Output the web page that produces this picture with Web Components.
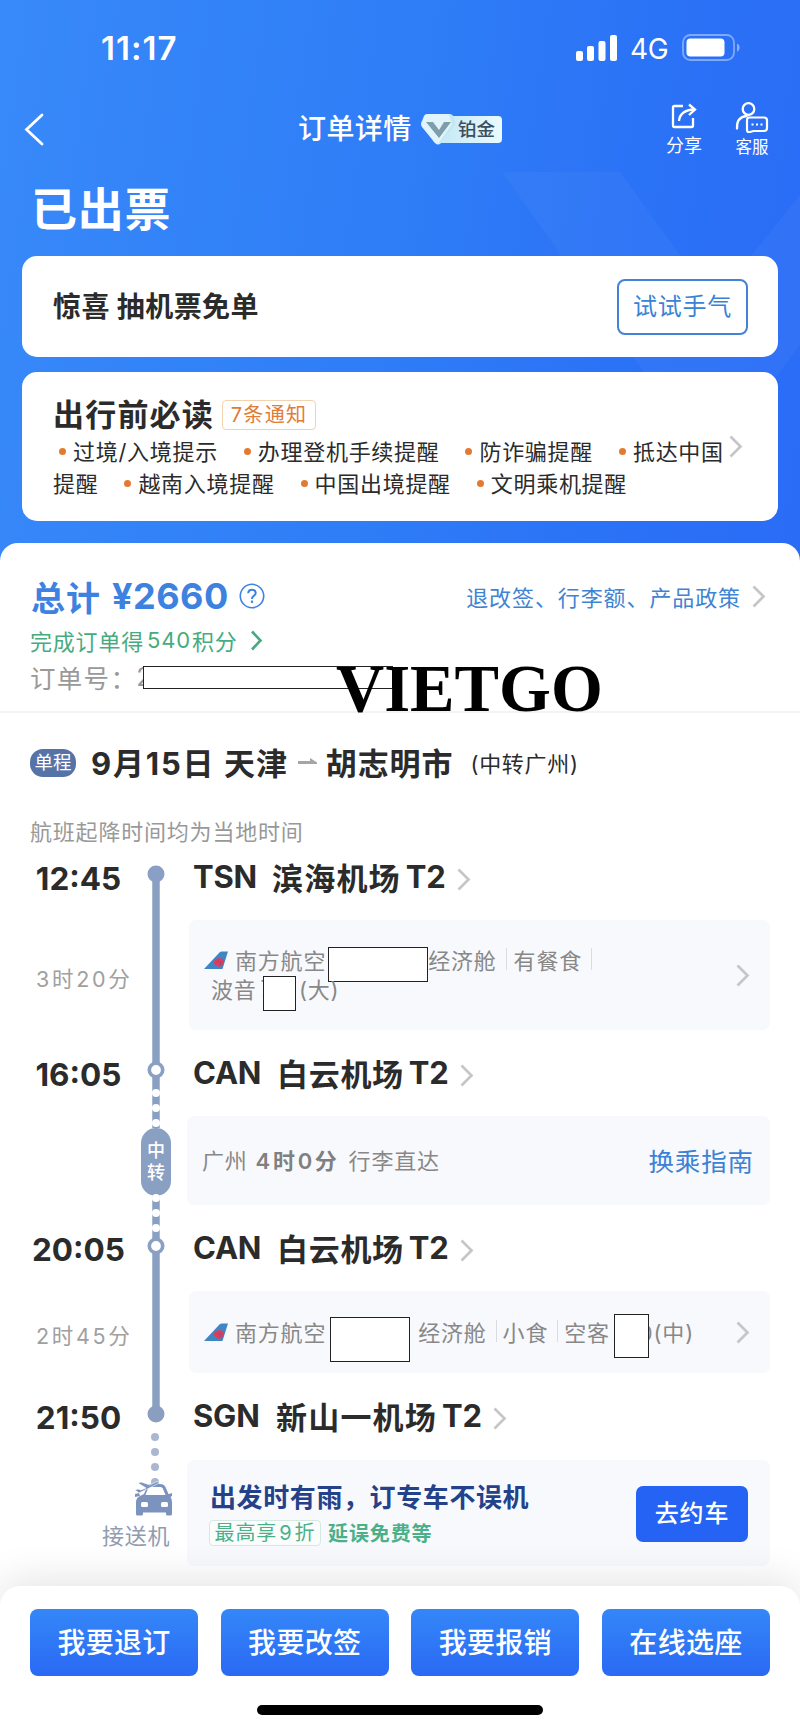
<!DOCTYPE html>
<html lang="zh-CN">
<head>
<meta charset="utf-8">
<title>订单详情</title>
<style>
  body {
    margin: 0;
    width: 800px;
    height: 1730px;
    overflow: hidden;
    background: #fff;
    color: #2b2b2b;
    font-family: Inter, "Noto Sans CJK SC", sans-serif;
    font-size: 22px;
  }
</style>
</head>
<body>
<order-page></order-page>

<script>
  // 注册一个带 open shadow root 的元素
  function define(name, html) {
    const template = document.createElement("template");
    template.innerHTML = html;
    customElements.define(name, class extends HTMLElement {
      constructor() {
        super();
        this.attachShadow({ mode: "open" }).appendChild(template.content.cloneNode(true));
      }
    });
  }

  define("arrow-right", `
    <style>
      :host { display: block; flex: none; width: 14px; height: 23px; color: #c6c6c6; }
      svg { display: block; width: 100%; height: 100%; }
    </style>
    <svg viewBox="0 0 14 23" fill="none" stroke="currentColor" stroke-width="2.700">
      <path d="M1.500 1.500 11.500 11.500 1.500 21.500"/>
    </svg>
  `);

  // 白色遮挡框
  define("mask-box", `
    <style>
      :host { display: block; flex: none; box-sizing: border-box; background: #fff; border: 1px solid #222; }
    </style>
  `);

  define("v-line", `
    <style>
      :host { display: block; flex: none; width: 1px; height: 22px; background: #d9dce3; }
    </style>
  `);

  define("status-bar", `
    <style>
      :host { display: flex; align-items: center; height: 96px; color: #fff; }
      .time { margin-left: 101px; width: 475px; font-size: 33px; font-weight: 600; letter-spacing: 1px; }
      .net { margin: 1px 15px 0 12px; width: 37px; font-size: 28px; font-weight: 400; letter-spacing: -0.4px; white-space: nowrap; }
      svg { display: block; flex: none; }
    </style>
    <span class="time">11:17</span>
    <svg width="42" height="26" fill="#fff">
      <rect x="0" y="16" width="7" height="10" rx="2"/>
      <rect x="11" y="11" width="7" height="15" rx="2"/>
      <rect x="22.500" y="6" width="7" height="20" rx="2"/>
      <rect x="34" y="0" width="7" height="26" rx="2"/>
    </svg>
    <span class="net">4G</span>
    <svg width="60" height="28">
      <rect x="1" y="1" width="51" height="25" rx="7.500" fill="none" stroke="#fff" stroke-opacity=".4" stroke-width="1.800"/>
      <rect x="4.500" y="4.500" width="38" height="18" rx="4" fill="#fff"/>
      <path d="M55 9.500c3.500 1.200 3.500 7 0 8.200z" fill="#fff" fill-opacity=".45"/>
    </svg>
  `);

  define("level-badge", `
    <style>
      :host { display: flex; align-items: center; width: 81px; height: 30px; }
      svg { display: block; flex: none; margin-right: -32px; z-index: 1; }
      span {
        box-sizing: border-box; width: 70px; height: 27px; padding-left: 25px;
        border-radius: 4px; background: linear-gradient(90deg, #bfe6f5, #e9fbff);
        color: #3d4f5c; font-size: 18.500px; line-height: 26px; font-weight: 500; white-space: nowrap;
      }
    </style>
    <svg width="44" height="31" viewBox="0 0 44 31">
      <path d="M6 0h22q3 0 5 3l2 7-15 19q-3 3-6 0L1 13q-2-3 0-6L3 2q1-2 3-2z" fill="#dff5fb"/>
      <path d="M28 0q3 0 5 3l2 7-15 19-3 1 14-20z" fill="#c4e8f2"/>
      <path d="M5 8h7l6 8 5-8h7L18 24z" fill="#7f9eaa"/>
    </svg>
    <span>铂金</span>
  `);

  define("nav-bar", `
    <style>
      :host { display: flex; height: 66px; color: #fff; }
      .back { margin: 17px 0 0 24px; flex: none; }
      .title { margin-left: 254px; width: 115px; font-size: 28px; line-height: 66px; letter-spacing: .4px; font-weight: 500; white-space: nowrap; }
      level-badge { margin: 18px 0 0 8px; }
      .tool { display: flex; flex-direction: column; align-items: center; white-space: nowrap; }
      .tool svg { flex: none; }
      .share { margin-left: 163px; width: 38px; padding-top: 7px; }
      .share span { font-size: 18px; line-height: 22px; margin-top: 6px; }
      .service { margin-left: 31px; width: 36px; padding-top: 5px; }
      .service span { font-size: 16.500px; line-height: 20px; margin-top: 4px; }
    </style>
    <svg class="back" width="20" height="33" fill="none" stroke="#fff" stroke-width="2.800" stroke-linecap="round"><path d="M18 2 2.500 16.500 18 31"/></svg>
    <span class="title">订单详情</span>
    <level-badge></level-badge>
    <div class="tool share">
      <svg width="26" height="26" fill="none" stroke="#fff" stroke-width="2.300">
        <path d="M12 3H3.500Q2 3 2 4.500v18Q2 24 3.500 24h17q1.500 0 1.500-1.500V15"/>
        <path d="M8 18Q9 7 23.500 6.500M18 1.500l6 5-6 5.500"/>
      </svg>
      <span>分享</span>
    </div>
    <div class="tool service">
      <svg width="34" height="32" fill="none" stroke="#fff" stroke-width="2.300">
        <circle cx="13.500" cy="8" r="5.800"/>
        <path d="M2 27.500Q1.500 16 11.500 15" stroke-linecap="round"/>
        <path d="M14 16.500h15q3 0 3 3v7.500q0 3-3 3H18.500l-5.500 1.500-1-2v-10q0-3 2-3z" stroke-linejoin="round" stroke-width="2.200"/>
        <path d="M16.500 23.500h2M21 23.500h2M25.500 23.500h2" stroke-width="2"/>
      </svg>
      <span>客服</span>
    </div>
  `);

  define("promo-card", `
    <style>
      :host {
        display: flex; align-items: center; justify-content: space-between; box-sizing: border-box;
        height: 101px; margin: 0 22px 15px; padding: 0 30px 0 31px; border-radius: 15px; background: #fff;
      }
      .text { padding-bottom: 3px; font-size: 28px; font-weight: 700; letter-spacing: .4px; }
      .btn {
        box-sizing: border-box; width: 131px; height: 56px; border: 2px solid #4283d8; border-radius: 8px;
        color: #3b82d6; font-size: 24px; line-height: 51px; letter-spacing: .7px; text-align: center;
      }
    </style>
    <span class="text">惊喜 抽机票免单</span>
    <span class="btn">试试手气</span>
  `);

  define("notice-dot", `
    <style>
      :host { display: flex; align-items: center; white-space: nowrap; }
      :host::before { content: ""; width: 7px; height: 7px; margin: 2px 7px 0 0; border-radius: 50%; background: #e37a33; }
    </style>
    <slot></slot>
  `);

  define("notice-card", `
    <style>
      :host {
        display: flex; flex-direction: column; box-sizing: border-box; height: 149px; margin: 0 22px;
        padding: 27px 30px 0 31px; border-radius: 15px; background: #fff;
      }
      .head { display: flex; align-items: center; height: 32px; }
      .title { width: 169px; font-size: 31px; line-height: 32px; letter-spacing: 1.200px; font-weight: 700; white-space: nowrap; }
      .tag {
        box-sizing: border-box; width: 94px; height: 30px; border: 1px solid #f3d3ae; border-radius: 4px;
        color: #df7c38; font-size: 20px; line-height: 29px; letter-spacing: 1.300px; text-align: center; white-space: nowrap;
      }
      .row { display: flex; align-items: center; height: 32px; margin-top: 3px; font-size: 22px; letter-spacing: .7px; gap: 26px; }
      .row + .row { margin-top: 0; }
      .first { padding-left: 6px; }
      arrow-right { margin: -8px 0 0 -21px; }
    </style>
    <div class="head"><span class="title">出行前必读</span><span class="tag">7条通知</span></div>
    <div class="row first">
      <notice-dot>过境/入境提示</notice-dot><notice-dot>办理登机手续提醒</notice-dot>
      <notice-dot>防诈骗提醒</notice-dot><notice-dot>抵达中国</notice-dot><arrow-right></arrow-right>
    </div>
    <div class="row">
      <span>提醒</span><notice-dot>越南入境提醒</notice-dot><notice-dot>中国出境提醒</notice-dot><notice-dot>文明乘机提醒</notice-dot>
    </div>
  `);

  define("order-header", `
    <style>
      :host {
        display: block; box-sizing: border-box; height: 565px;
        background:
          url("data:image/svg+xml,%3Csvg xmlns='http://www.w3.org/2000/svg' width='800' height='565'%3E%3Cpath d='M502 172H620L714 302 800 195V345L710 465z' fill='%23fff' fill-opacity='.035'/%3E%3C/svg%3E"),
          linear-gradient(98deg, #3889f9 0%, #2f7ef7 45%, #2a71f6 80%, #2b6cf6 100%);
      }
      h1 { margin: 0 0 0 31px; font-size: 46px; line-height: 94px; letter-spacing: .8px; font-weight: 700; color: #fff; }
    </style>
    <status-bar></status-bar>
    <nav-bar></nav-bar>
    <h1>已出票</h1>
    <promo-card></promo-card>
    <notice-card></notice-card>
  `);

  define("order-summary", `
    <style>
      :host { display: block; position: relative; box-sizing: border-box; height: 170px; padding-top: 32px; border-bottom: 2px solid #f3f3f3; white-space: nowrap; }
      .total { display: flex; align-items: center; height: 42px; padding: 0 34px 0 31px; color: #3d82e0; }
      .label { width: 81px; font-size: 34px; font-weight: 700; letter-spacing: 1px; }
      .price { width: 127px; font-size: 36px; font-weight: 700; line-height: 40px; letter-spacing: .5px; }
      .total svg { margin-top: 0; }
      .policy { margin: 0 11px 0 auto; font-size: 22px; letter-spacing: .9px; color: #3f84d2; }
      .points { display: flex; align-items: center; height: 45px; padding-left: 30px; color: #47ab80; font-size: 22px; letter-spacing: .8px; }
      .points span { margin: 0 1px 0 3px; }
      .points svg { margin: 1px 0 0 12px; }
      .number { display: flex; align-items: center; height: 28px; padding-left: 30px; color: #999; font-size: 25.500px; letter-spacing: 1.300px; }
      .number i { font-style: normal; margin-left: -1px; }
      mask-box { position: absolute; left: 143px; top: 123px; width: 250px; height: 23px; }
      .mark { position: absolute; left: 336px; top: 108px; font: bold 66.700px/76px "Liberation Serif", serif; color: #000; }
    </style>
    <div class="total">
      <span class="label">总计</span><span class="price">¥2660</span>
      <svg width="26" height="26" fill="none" stroke="currentColor" stroke-width="1.600">
        <circle cx="13" cy="13" r="11.700"/>
        <path d="M9.200 10.300Q9.400 6.800 13 6.800t3.700 3.100q0 1.700-2 3Q13 14 13 16" stroke-width="2"/>
        <path d="M13 17.600v2.300" stroke-width="2.200"/>
      </svg>
      <span class="policy">退改签、行李额、产品政策</span>
      <arrow-right></arrow-right>
    </div>
    <div class="points">完成订单得<span>540</span>积分
      <svg width="13" height="21" fill="none" stroke="currentColor" stroke-width="2.600"><path d="M2 1.500 10.500 10.500 2 19.500"/></svg>
    </div>
    <div class="number">订单号：<i>2</i></div>
    <mask-box></mask-box>
    <span class="mark">VIETGO</span>
  `);

  define("route-title", `
    <style>
      :host { display: block; white-space: nowrap; }
      .route { display: flex; align-items: center; box-sizing: border-box; height: 100px; padding: 0 0 3px 30px; font-size: 31px; font-weight: 700; letter-spacing: .9px; }
      .tag { width: 46px; height: 28px; margin-top: 3px; border-radius: 13px; background: #5673a8; color: #fff; font-size: 18.500px; line-height: 27px; font-weight: 400; letter-spacing: 0; text-align: center; }
      .date { margin-left: 15px; width: 133px; letter-spacing: 1.800px; }
      svg { margin: 0 9px 0 10px; flex: none; }
      .via { margin-left: 17px; font-size: 22px; font-weight: 400; letter-spacing: .7px; }
      .note { height: 38px; line-height: 38px; padding-left: 30px; font-size: 22px; letter-spacing: .8px; color: #999; }
    </style>
    <div class="route">
      <span class="tag">单程</span>
      <span class="date">9月15日</span>
      <span>天津</span>
      <svg width="19" height="8"><path d="M0 3h12V0l7 4.500V6H0z" fill="#a5a5a5"/></svg>
      <span>胡志明市</span>
      <span class="via">(中转广州)</span>
    </div>
    <div class="note">航班起降时间均为当地时间</div>
  `);

  define("trip-rail", `
    <style>
      :host { display: flex; flex-direction: column; width: 30px; }
      svg { display: block; flex: none; overflow: visible; }
      .pill {
        display: flex; flex-direction: column; align-items: center; justify-content: center; height: 68px;
        border-radius: 15px; background: #8aa0c2; color: #fff; font-size: 18px; line-height: 22.500px; font-weight: 500;
      }
    </style>
    <svg width="30" height="277">
      <path d="M15 23V277" stroke="#8aa0c2" stroke-width="7.500"/>
      <circle cx="15" cy="23" r="8.500" fill="#8a9fc6"/>
      <circle cx="15" cy="219" r="6.700" fill="#fff" stroke="#8aa0c2" stroke-width="3.600"/>
      <g fill="#fff"><circle cx="15" cy="242" r="4"/><circle cx="15" cy="257" r="4"/><circle cx="15" cy="272" r="4"/></g>
    </svg>
    <div class="pill"><span>中</span><span>转</span></div>
    <svg width="30" height="324">
      <path d="M15 0V218" stroke="#8aa0c2" stroke-width="7.500"/>
      <circle cx="15" cy="218" r="8.500" fill="#8a9fc0"/>
      <circle cx="15" cy="50" r="6.700" fill="#fff" stroke="#8aa0c2" stroke-width="3.600"/>
      <g fill="#fff"><circle cx="15" cy="2" r="4"/><circle cx="15" cy="17" r="4"/><circle cx="15" cy="32" r="4"/></g>
      <g fill="#a9b8d0"><circle cx="14" cy="241" r="4"/><circle cx="14" cy="256" r="4"/><circle cx="14" cy="271" r="4"/><circle cx="14" cy="286" r="4"/></g>
      <!-- 接送机：小汽车和飞机 -->
      <g transform="translate(-6 284)" fill="#7b93bd">
        <path d="M1 34V22q0-4 4-6l4-2 3-7q1-3 5-3h8q4 0 5.500 3l3 7 3 2-1 1q1.500 2 1.500 5v12q0 1.500-1.500 1.500h-3q-1.500 0-1.500-1.500v-1.500H8v1.500q0 1.500-1.500 1.500h-4Q1 35.500 1 34z"/>
        <path d="M34 14l3-1v3l-3 1zM0 14l4-1 1 3-5 1z"/>
        <path d="M10.500 15 13 8.500Q13.700 7 15.500 7h10q1.500 0 2.300 1.500L30.500 15z" fill="#fff"/>
        <rect x="6" y="22" width="7" height="5" rx="1.500" fill="#fff"/>
        <rect x="26" y="22" width="7" height="5" rx="1.500" fill="#fff"/>
        <path d="M0 10l3-1 3 1 5-2-8-5 3-1 9 3 6-3q2-.800 3 .200-.500 1.300-2 2L4 13z" stroke="#fff" stroke-width=".6"/>
      </g>
    </svg>
  `);

  define("stop-time", `
    <style>
      :host { display: block; width: 157px; text-align: center; font-size: 31.500px; font-weight: 700; line-height: 55px; letter-spacing: 0; white-space: nowrap; }
    </style>
    <slot></slot>
  `);

  define("leg-duration", `
    <style>
      :host { display: block; padding-left: 36px; font-size: 21.500px; letter-spacing: 2.700px; color: #a0a0a0; white-space: nowrap; }
    </style>
    <slot></slot>
  `);

  define("stop-name", `
    <style>
      :host { display: flex; align-items: center; margin-left: 22px; height: 51px; font-size: 31px; letter-spacing: var(--gap, 1.200px); font-weight: 700; white-space: nowrap; }
      .code, .gate { letter-spacing: -0.2px; }
      .code { width: var(--code, 79px); }
      .gate { margin: 0 11px 0 5px; }
      arrow-right { margin-top: 6px; }
    </style>
    <span class="code"><slot name="code"></slot></span><slot></slot>
    <span class="gate">T2</span><arrow-right></arrow-right>
  `);

  define("airline-icon", `
    <style>
      :host { display: block; flex: none; width: 24px; height: 18px; }
      svg { display: block; }
    </style>
    <svg width="24" height="18"><path d="M0 18 15.500 1.500Q16.500.500 18 .500h6L18.500 18z" fill="#3f86c6"/>
      <path d="M10 10l2-2 3-1 4 1 1 3-2 4-4 1-2-2-2-1z" fill="#dd3d5c"/><path d="M13 10.500l4 .500-1 3" fill="none" stroke="#8f4d80"/></svg>
  `);

  define("info-card", `
    <style>
      :host {
        display: flex; align-items: center; justify-content: space-between; box-sizing: border-box;
        margin: 15px 30px 0 18px; padding-right: 20px; border-radius: 7px; background: #f8f9fd;
        color: #888; font-size: 22px; letter-spacing: .8px; white-space: nowrap;
      }
    </style>
    <slot></slot>
  `);

  define("trip-plan", `
    <style>
      :host {
        display: grid; grid-template-columns: 141px 30px 1fr;
        grid-template-rows: 54px 142px 54px 121px 54px 114px 54px 142px;
      }
      trip-rail { grid-column: 2; grid-row: 1 / -1; }
      .l { grid-column: 1; }
      .r { grid-column: 3; }
      .g1 { grid-row: 1; } .g2 { grid-row: 2; } .g3 { grid-row: 3; } .g4 { grid-row: 4; }
      .g5 { grid-row: 5; } .g6 { grid-row: 6; } .g7 { grid-row: 7; } .g8 { grid-row: 8; }
      .line { display: flex; align-items: center; height: 29px; }
      arrow-right { color: #c5c6ca; }
      v-line { margin: 0 7px 0 9px; }

      .flight1 { height: 110px; }
      .flight1 .lines { padding: 0 0 3px 15px; }
      .flight1 .a mask-box { width: 100px; height: 35px; margin: 10px 0 0 2px; }
      .flight1 .b { padding-left: 7px; }
      .flight1 .b span { margin-left: 4px; }
      .flight1 .b mask-box { width: 33px; height: 35px; margin: 11px 3px 0 -11px; z-index: 1; }
      airline-icon { margin: 2px 7px 0 0; }

      .transfer { height: 89px; margin-left: 16px; padding: 0 16px 3px 15px; }
      .transfer b { margin: 0 9px 0 8px; font-weight: 600; letter-spacing: 2.700px; color: #808080; }
      .guide { color: #3b82d6; font-size: 25.500px; letter-spacing: .9px; }

      .flight2 { height: 82px; }
      .flight2 .line { padding: 0 0 2px 15px; }
      .flight2 .m1 { width: 80px; height: 45px; margin: 17px 8px 0 4px; }
      .flight2 .m2 { width: 35px; height: 44px; margin: 10px 0 0 4px; z-index: 1; }
      .flight2 v-line { margin: 0 6px 0 9px; }

      .pickup { margin: 79px 0 0 102px; height: 26px; line-height: 26px; letter-spacing: .8px; color: #909bb0; white-space: nowrap; }
      .ride { height: 106px; margin-left: 16px; padding: 0 22px 0 23px; margin-top: 16px; }
      .tip { font-size: 26px; line-height: 36px; letter-spacing: .6px; font-weight: 700; color: #24428a; }
      .tags { display: flex; align-items: center; height: 28px; margin-top: 3px; font-size: 20px; letter-spacing: .9px; color: #4bb088; }
      .tags span { box-sizing: border-box; width: 112px; height: 26px; margin-left: -1px; border: 1px solid #d5e8e4; border-radius: 4px; text-align: center; line-height: 24px; background: #fbfdfd; }
      .tags i { font-style: normal; margin: 0 2px; }
      .tags b { margin-left: 7px; font-weight: 700; }
      .book { width: 112px; height: 56px; margin-top: 1px; border-radius: 7px; background: #2563f5; color: #fff; font-size: 24px; line-height: 55px; font-weight: 500; text-align: center; }
    </style>
    <trip-rail></trip-rail>

    <stop-time class="l g1">12:45</stop-time>
    <stop-name class="r g1"><span slot="code">TSN</span>滨海机场</stop-name>

    <leg-duration class="l g2" style="line-height:149px">3时20分</leg-duration>
    <info-card class="r g2 flight1">
      <div class="lines">
        <div class="line a"><airline-icon></airline-icon>南方航空<mask-box></mask-box>经济舱<v-line></v-line>有餐食<v-line></v-line></div>
        <div class="line b">波音<span>7</span><mask-box></mask-box>(大)</div>
      </div>
      <arrow-right></arrow-right>
    </info-card>

    <stop-time class="l g3">16:05</stop-time>
    <stop-name class="r g3" style="--code:84px;--gap:.7px"><span slot="code">CAN</span>白云机场</stop-name>

    <info-card class="r g4 transfer">
      <div>广州<b>4时0分</b>行李直达</div>
      <span class="guide">换乘指南</span>
    </info-card>

    <stop-time class="l g5">20:05</stop-time>
    <stop-name class="r g5" style="--code:84px;--gap:.7px"><span slot="code">CAN</span>白云机场</stop-name>

    <leg-duration class="l g6" style="line-height:121px">2时45分</leg-duration>
    <info-card class="r g6 flight2">
      <div class="line"><airline-icon></airline-icon>南方航空<mask-box class="m1"></mask-box>经济舱<v-line></v-line>小食<v-line></v-line>空客<mask-box class="m2"></mask-box><span style="margin-left:-10px">0(中)</span></div>
      <arrow-right></arrow-right>
    </info-card>

    <stop-time class="l g7">21:50</stop-time>
    <stop-name class="r g7" style="--code:83px"><span slot="code">SGN</span>新山一机场</stop-name>

    <div class="l g8 pickup">接送机</div>
    <info-card class="r g8 ride">
      <div>
        <div class="tip">出发时有雨，订专车不误机</div>
        <div class="tags"><span>最高享<i>9</i>折</span><b>延误免费等</b></div>
      </div>
      <span class="book">去约车</span>
    </info-card>
  `);

  define("action-button", `
    <style>
      :host {
        display: block; flex: 1; height: 67px; border-radius: 8px; background: linear-gradient(#3487f8, #2a69f4);
        color: #fff; font-size: 28px; line-height: 68px; letter-spacing: .3px; font-weight: 500; text-align: center;
      }
    </style>
    <slot></slot>
  `);

  define("action-bar", `
    <style>
      :host {
        display: flex; flex-direction: column; align-items: center; position: relative; height: 144px;
        border-radius: 20px 20px 0 0; background: #fff; box-shadow: 0 -6px 40px rgba(0, 0, 0, .11);
      }
      .buttons { display: flex; gap: 22.500px; align-self: stretch; padding: 23px 30px 0; }
      .home { width: 286px; height: 10px; margin-top: 29px; border-radius: 5px; background: #000; }
    </style>
    <div class="buttons">
      <action-button>我要退订</action-button>
      <action-button>我要改签</action-button>
      <action-button>我要报销</action-button>
      <action-button>在线选座</action-button>
    </div>
    <div class="home"></div>
  `);

  define("order-page", `
    <style>
      :host { display: flex; flex-direction: column; height: 1730px; }
      .panel { position: relative; margin-top: -22px; border-radius: 18px 18px 0 0; background: #fff; flex: none; }
      trip-plan { height: 735px; overflow: hidden; }
    </style>
    <order-header></order-header>
    <div class="panel">
      <order-summary></order-summary>
      <route-title></route-title>
      <trip-plan></trip-plan>
    </div>
    <action-bar></action-bar>
  `);
</script>
</body>
</html>
